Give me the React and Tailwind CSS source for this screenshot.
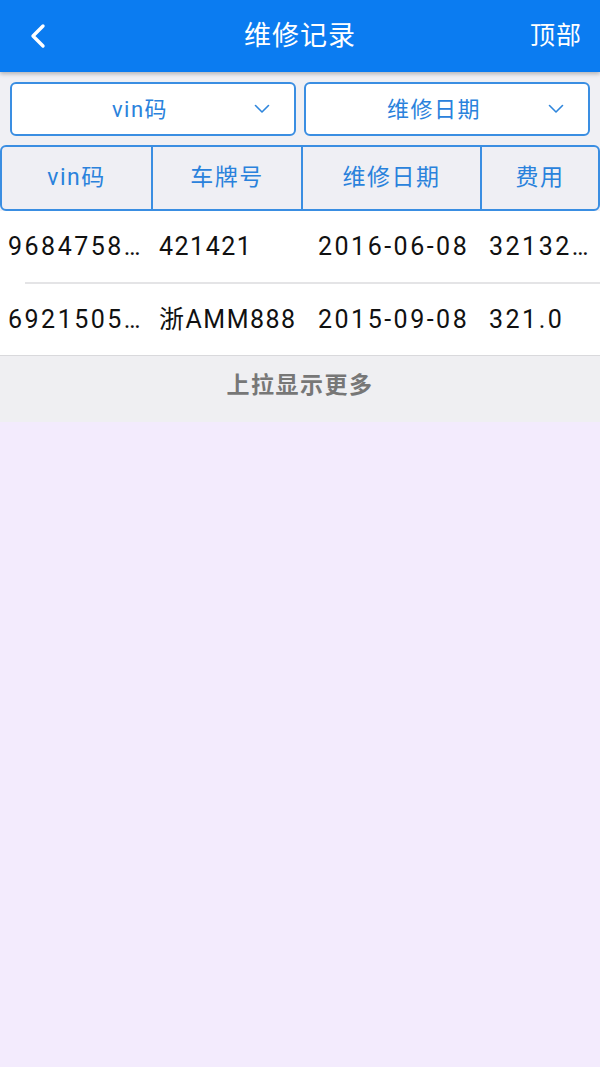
import React from 'react';

const rows = [
  { vin: '9684758…', plate: '421421', date: '2016-06-08', fee: '32132…' },
  { vin: '6921505…', plate: '浙AMM888', date: '2015-09-08', fee: '321.0' },
];

const font = { fontFamily: 'Roboto, "Noto Sans CJK SC", sans-serif' };

const Chevron = () => (
  <svg width="16" height="10" viewBox="0 0 16 10" className="text-[#2f86dc]">
    <path d="M1.5 1.5 L8 8 L14.5 1.5" fill="none" stroke="currentColor" strokeWidth="1.6" strokeLinecap="round" strokeLinejoin="round" />
  </svg>
);

const SelectBox = ({ label }) => (
  <div className="flex-1 h-[54px] bg-white border-2 border-[#3a8ee2] rounded-[6px] flex items-center relative">
    <span className="flex-1 text-center text-[22px] tracking-[1.5px] text-[#2a82dc] pr-[26px]">{label}</span>
    <span className="absolute right-[24px] top-[20px]">
      <Chevron />
    </span>
  </div>
);

const App = () => {
  return (
    <div className="w-[600px] h-[1067px] bg-[#f3ebfd] flex flex-col" style={font}>
      {/* Title bar */}
      <div className="h-[72px] bg-[#0b7cf1] flex items-center px-[28px] relative shadow-[0_2px_4px_rgba(0,0,0,0.25)] z-10">
        <svg width="20" height="26" viewBox="0 0 20 26" className="text-white">
          <path d="M15 3 L5 13 L15 23" fill="none" stroke="currentColor" strokeWidth="3.4" strokeLinecap="round" strokeLinejoin="round" />
        </svg>
        <span className="absolute left-0 right-0 text-center text-white text-[27px] tracking-[1px] pointer-events-none">维修记录</span>
        <span className="ml-auto text-white text-[25px] tracking-[1px] -mr-[10px]">顶部</span>
      </div>

      {/* Filters */}
      <div className="bg-[#f0f0f4] pt-[10px] pb-[9px] px-[10px] flex gap-[8px]">
        <SelectBox label="vin码" />
        <SelectBox label="维修日期" />
      </div>

      {/* Table header */}
      <div className="bg-[#f0f0f4]">
        <div className="h-[66px] border-2 border-[#3a8ee2] rounded-[6px] bg-[#efeff4] flex text-[#2a82dc] text-[23px] tracking-[1.5px]">
          <div className="w-[151px] border-r-2 border-[#3a8ee2] flex items-center justify-center">vin码</div>
          <div className="w-[150px] border-r-2 border-[#3a8ee2] flex items-center justify-center">车牌号</div>
          <div className="w-[179px] border-r-2 border-[#3a8ee2] flex items-center justify-center">维修日期</div>
          <div className="flex-1 flex items-center justify-center">费用</div>
        </div>
      </div>

      {/* Rows */}
      <div className="bg-white">
        {rows.map((r, i) => (
          <div key={i}>
            {i > 0 && <div className="ml-[25px] h-[2px] bg-[#e4e4e6]" />}
            <div className="h-[71px] flex items-center text-[25px] tracking-[2.5px] text-[#111] whitespace-nowrap">
              <div className="w-[159px] pl-[8px]">{r.vin}</div>
              <div className="w-[159px] tracking-[1.5px]">{r.plate}</div>
              <div className="w-[171px]">{r.date}</div>
              <div className="flex-1">{r.fee}</div>
            </div>
          </div>
        ))}
      </div>

      {/* Load more */}
      <div className="h-[67px] bg-[#efeff2] border-t border-[#d9d9dc] flex items-center justify-center pb-[5px]">
        <span className="text-[23px] font-bold text-[#777] tracking-[1.5px]">上拉显示更多</span>
      </div>

      <div className="flex-1 bg-[#f3ebfd]" />
    </div>
  );
};

export default App;
